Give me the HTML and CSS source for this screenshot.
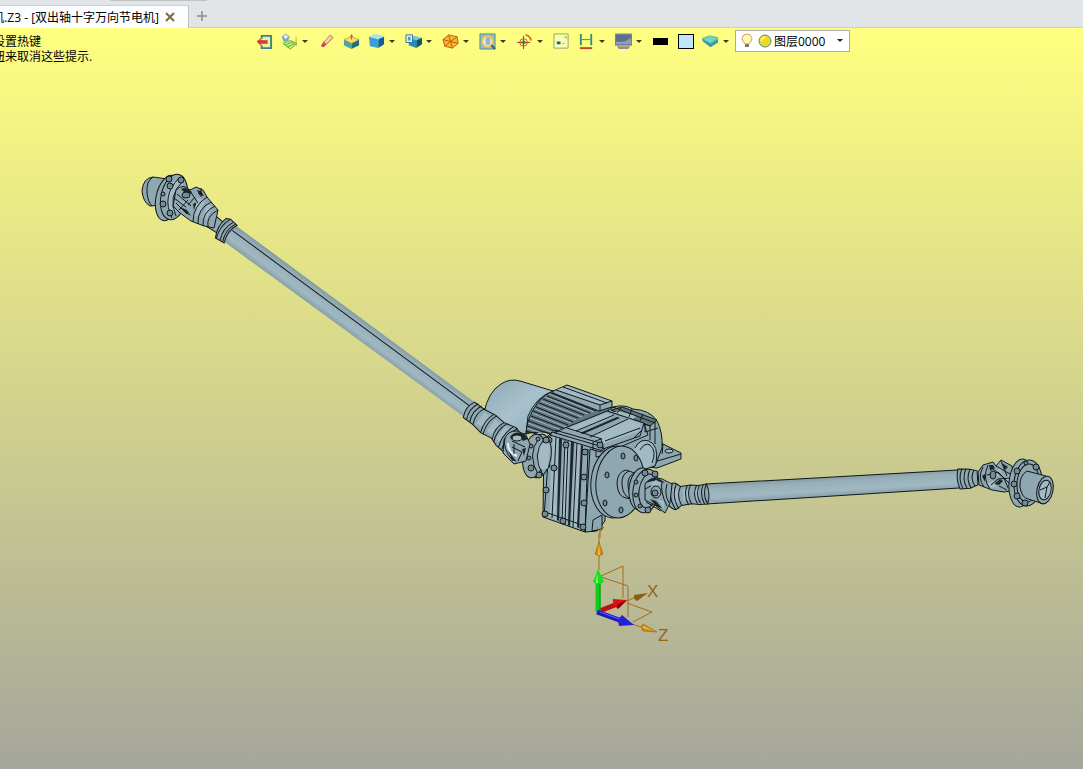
FILE: index.html
```html
<!DOCTYPE html>
<html lang="zh-CN">
  <head>
    <title>双出轴十字万向节电机</title>
    <meta charset="UTF-8" />
    <meta name="viewport" content="width=device-width, initial-scale=1.0" />
    <link rel="stylesheet" href="styles.css">
  </head>

  <body>
    <header class="tab-bar">
      <div class="tab">
        <span class="tab-title">机.Z3 - [双出轴十字万向节电机]</span>
        <button class="tab-close" type="button" aria-label="关闭">
          <svg width="10" height="10" viewBox="0 0 10 10"><path d="M1 1 9 9M9 1 1 9" stroke="#7c6b3c" stroke-width="2" /></svg>
        </button>
      </div>
      <button class="tab-add" type="button" aria-label="新建">
        <svg width="12" height="12" viewBox="0 0 12 12"><path d="M6 1V11M1 6H11" stroke="#9b9fa1" stroke-width="2" /></svg>
      </button>
    </header>

    <main class="viewport">
      <!-- 3D model -->
      <svg class="scene" viewBox="0 28 1083 741" aria-hidden="true">
        <defs>
          <linearGradient id="tube" x1="0" y1="0" x2="0" y2="1">
            <stop offset="0" stop-color="#8299a0" />
            <stop offset=".25" stop-color="#97afb8" />
            <stop offset=".7" stop-color="#a0b8c1" />
            <stop offset="1" stop-color="#879ea6" />
          </linearGradient>
          <linearGradient id="motor" x1="0" y1="0" x2="1" y2="1">
            <stop offset="0" stop-color="#8fa8b2" />
            <stop offset=".5" stop-color="#a7c2ce" />
            <stop offset="1" stop-color="#91aab4" />
          </linearGradient>
        </defs>

        <!-- motor -->
        <path class="metal" fill="url(#motor)" d="M484 413Q488 392 501 384Q510 378 520 381L553 391L540 430L526 434L505 432Z" />
        <path class="line" d="M553 391Q536 397 528 416L526 434" />
        <path class="dark" d="M526 433Q527 416 539 401Q545 394 553 391L599 410L612 407L630 417L569 439L545 432Z" />
        <path class="fin" d="M549 394 594 412M545 397 588 414M541 401 582 417M538 405 576 420M535 409 571 423M532 413 566 427M530 418 561 430M528 423 556 434M527 428 550 436" />
        <path class="line" d="M551 393 596 411M547 396 590 413M543 399 584 415M539 403 578 418M536 407 573 422M533 411 568 425M531 416 563 428M529 421 558 432M527 426 553 435M526 431 548 437" />
        <path class="metal" d="M567 385 612 401V407L599 411L553 393V391Z" />
        <path class="light" d="M567 386 610 401L600 404L556 390Z" />
        <path class="line" d="M556 390 600 405V411M600 405 612 401M563 387 607 403" />

        <!-- rear of the gearbox and mounting foot -->
        <path class="metal" d="M650 437 663 444L681 453V459L657 468L640 466Z" />
        <path class="line" d="M654 462 681 454M663 444 662 454" />
        <ellipse class="light line" cx="669" cy="451" rx="4" ry="2" />
        <path class="metal" d="M604 414 613 407Q624 404 633 409Q650 410 657 421Q663 432 662 448L655 466L603 483V433Z" />
        <path class="dark" d="M611 410 622 407L657 420L650 426Z" />
        <path class="light" d="M618 411 636 416L632 421L613 413Z" />
        <path class="line" d="M613 407 655 423M610 412 650 426M621 408 617 413M632 409 629 417M643 414 640 421M655 421V444M650 426V440M645 424V432L658 428" />
        <path class="light" d="M635 447Q641 438 650 441Q660 446 656 462L646 468L632 460Z" />
        <path class="line" d="M635 448Q640 438 649 441Q659 445 656 463M640 450Q645 442 650 445Q657 451 652 463" />

        <!-- gearbox top -->
        <path class="metal" d="M560 430 607 411L644 423L640 436L603 449L555 433Z" />
        <path class="light" d="M568 428 606 413L614 416L576 432ZM590 436 628 419L641 424L638 432L605 443Z" />
        <path class="black" d="M580 433 617 417L620 418L583 434Z" />
        <path class="line" d="M567 428 602 439M576 431 614 415M590 437 628 419M640 428 605 441M644 424 648 435L606 453M641 431 634 438" />

        <!-- gearbox front -->
        <path class="metal" d="M603 447 606 455L605 521L597 531L585 532L587 448Z" />
        <path class="metal" d="M552 432 603 447L601 452L590 449L585 532L543 517L544 440Z" />
        <path class="light" d="M553 435 559 437L556 520L549 517ZM565 439 570 440L567 524L560 522ZM576 443 580 444L577 528L571 526Z" />
        <path class="black" d="M559 438 562 439L559 521L557 520ZM571 441 574 442L570 526L568 525ZM581 445 583 446L579 528L577 527Z" />
        <path class="line" d="M550 435 603 451M552 432 550 436L544 517M556 437 552 518M565 440 562 522M568 441 565 524M577 443 573 527M588 449 585 532M545 512 585 526M555 430 600 443M593 450V442L601 439L603 447M596 451V457L606 455" />
        <path class="metal" d="M593 520 602 515V529L592 531Z" />
        <g class="bolt">
          <circle cx="549" cy="440" r="3" /><circle cx="566" cy="445" r="3" /><circle cx="585" cy="452" r="3" />
          <circle cx="547" cy="465" r="3" /><circle cx="554" cy="468" r="3" /><circle cx="584" cy="477" r="3" />
          <circle cx="546" cy="490" r="3" /><circle cx="584" cy="503" r="3" /><circle cx="545" cy="514" r="3" />
          <circle cx="563" cy="521" r="3" /><circle cx="583" cy="527" r="3" /><circle cx="600" cy="445" r="3" />
        </g>

        <!-- output flange -->
        <ellipse class="metal" cx="615" cy="482" rx="24" ry="36" transform="rotate(6 615 482)" />
        <ellipse class="metal" cx="620" cy="482" rx="24" ry="36" transform="rotate(6 620 482)" />
        <g class="bolt">
          <ellipse cx="623" cy="456" rx="2" ry="3" /><ellipse cx="636" cy="458" rx="2" ry="3" />
          <ellipse cx="607" cy="475" rx="2" ry="3" /><ellipse cx="605" cy="503" rx="2" ry="3" />
          <ellipse cx="621" cy="510" rx="2" ry="3" />
        </g>
        <path class="metal" d="M640 475 626 470Q617 472 617 484Q618 497 626 498L640 500Z" />
        <path class="line" d="M629 471Q621 474 622 485Q623 495 629 498M634 473Q627 477 628 486Q629 496 634 499" />

        <!-- right shaft -->
        <g transform="translate(706 494) rotate(-3.4)">
          <path fill="url(#tube)" d="M0 -10 257 -9V9L0 10Z" />
          <path class="line" d="M0 -10 257 -9M0 10 257 9" />
          <path class="metal" d="M-38 -9Q-33 -15 -29 -12L-25 -9L-15 -10L-7 -9L1 -10Q5 0 1 10L-7 10L-15 9L-25 10L-31 14Q-38 12 -40 4Z" />
          <path class="light" d="M-33 -7H-27V7H-33ZM-23 -6H-17V6H-23ZM-12 -6H-7V6H-12Z" />
          <path class="line" d="M-33 -13Q-39 0 -31 14M-29 -12Q-35 0 -28 13M-25 -9Q-30 0 -25 10M-18 -10Q-23 0 -18 10M-15 -10Q-20 0 -15 9M-9 -9Q-14 0 -9 9M-6 -9Q-11 0 -6 9M-2 -10Q-7 0 -2 10M1 -10Q-4 0 1 10" />
          <path class="metal" d="M253 -10 265 -9L272 -7V7L264 10L254 10Q250 0 253 -10Z" />
          <path class="line" d="M257 -10Q252 0 257 10M261 -10Q256 0 261 10M265 -9Q260 0 265 10M269 -8Q264 0 269 8" />
        </g>
        <ellipse class="metal" cx="641" cy="489" rx="12" ry="21" transform="rotate(6 641 489)" />
        <ellipse class="metal" cx="646" cy="491" rx="13" ry="22" transform="rotate(8 646 491)" />
        <ellipse class="line" cx="648" cy="491" rx="9" ry="17" transform="rotate(8 648 491)" />
        <g class="bolt">
          <circle cx="645" cy="473" r="3" /><circle cx="655" cy="474" r="3" /><circle cx="636" cy="482" r="2" />
          <circle cx="636" cy="495" r="2" /><circle cx="640" cy="506" r="2" /><circle cx="648" cy="510" r="3" />
        </g>
        <path class="metal" d="M645 484Q652 475 662 479L672 484L670 503L665 513L655 505L645 500Z" />
        <path class="black" d="M645 483Q653 475 661 480L665 483L653 481ZM650 499 656 501L662 508L657 507Z" />
        <path class="light" d="M649 484 656 480L662 483L657 486ZM657 499 664 501V509Z" />
        <ellipse class="metal" cx="656" cy="492" rx="5" ry="6" />
        <ellipse class="bolt" cx="655" cy="493" rx="3" ry="3" />
        <path class="line" d="M645 489 651 486M662 482Q660 492 667 506M667 484Q664 494 669 503M646 502 661 511" />

        <!-- right end joint -->
        <path class="metal" d="M978 472 983 465L993 462L996 466L1001 460L1012 466L1016 490L1004 492L992 490L979 485Z" />
        <path class="black" d="M989 465 993 465L995 468L990 471ZM1002 463 1008 467L1005 470ZM994 484 1000 479L1003 481L999 485ZM982 476 985 474V482Z" />
        <path class="light" d="M995 471 1003 467L1000 475L994 478ZM1004 479 1010 473V483ZM987 483 993 481 997 487 991 488Z" />
        <path class="line" d="M983 467Q977 478 984 487M988 465Q982 479 990 489M987 475 998 472L1010 484M992 468 1004 478L1008 488M991 485 998 479L1009 478M996 466 1010 474M1001 461 1007 476M999 486 1007 490" />
        <ellipse class="bolt" cx="993" cy="475" rx="3" ry="4" />
        <ellipse class="metal" cx="1021" cy="483" rx="12" ry="24" transform="rotate(5 1021 483)" />
        <ellipse class="metal" cx="1028" cy="483" rx="14" ry="23" transform="rotate(5 1028 483)" />
        <ellipse class="line" cx="1028" cy="483" rx="11" ry="19" transform="rotate(5 1028 483)" />
        <g class="bolt">
          <circle cx="1026" cy="463" r="2" /><circle cx="1036" cy="467" r="3" /><circle cx="1017" cy="471" r="3" />
          <circle cx="1014" cy="484" r="3" /><circle cx="1017" cy="496" r="3" /><circle cx="1025" cy="503" r="3" />
        </g>
        <path class="metal" d="M1046 476 1027 471Q1019 476 1020 487Q1022 498 1028 499L1044 504Z" />
        <ellipse class="metal" cx="1045" cy="490" rx="8" ry="14" transform="rotate(12 1045 490)" />
        <ellipse class="light line" cx="1045" cy="490" rx="6" ry="10" transform="rotate(12 1045 490)" />
        <path class="line" d="M1040 490 1047 487L1050 482M1047 487 1045 498" />

        <!-- left shaft -->
        <g transform="translate(225 230) rotate(36.3)">
          <path fill="url(#tube)" d="M0 -10 312 -9V9L0 10Z" />
          <path class="line" d="M6 -4 308 -3" />
          <path class="metal" d="M-17 -6 -3 -5V7L-17 8Z" />
          <path class="metal" d="M-6 -10 -2 -12L7 -11Q2 0 7 11L-3 12Q-9 2 -6 -10Z" />
          <path class="line" d="M-2 -12Q-7 0 -2 12M2 -11Q-3 0 2 11M5 -11Q0 0 5 11" />
          <path class="metal" d="M303 -9 315 -9L328 -11L339 -10L352 -13L358 -11L357 14L346 13L338 10L326 12L315 10L303 10Q298 0 303 -9Z" />
          <path class="light" d="M317 -7H324V7H317ZM330 -7H336V7H330ZM342 -8H347V8H342Z" />
          <path class="line" d="M307 -10Q302 0 307 10M311 -10Q306 0 311 10M315 -10Q310 0 315 10M326 -11Q321 0 326 12M329 -11Q324 0 329 12M339 -10Q334 0 339 10M342 -11Q337 0 342 12M349 -12Q344 0 349 13M353 -13Q348 0 353 13" />
        </g>

        <!-- joint at the gearbox -->
        <ellipse class="metal" cx="539" cy="456" rx="12" ry="22" transform="rotate(9 539 456)" />
        <ellipse class="metal" cx="534" cy="456" rx="11" ry="22" transform="rotate(9 534 456)" />
        <path class="light" d="M537 447Q543 440 550 445L548 468Q541 472 537 466Z" />
        <path class="line" d="M539 438Q526 455 539 476M544 439Q531 455 543 475" />
        <g class="bolt">
          <circle cx="538" cy="439" r="2" /><circle cx="546" cy="440" r="3" /><circle cx="531" cy="446" r="2" />
          <circle cx="529" cy="458" r="2" /><circle cx="531" cy="468" r="3" /><circle cx="539" cy="475" r="3" />
        </g>
        <path class="metal" d="M504 440Q508 430 517 431L526 435L530 444L526 461L514 464L503 453Z" />
        <path class="black" d="M510 437Q515 430 524 434L528 439L523 441L519 436L512 440ZM508 450 513 457L517 462L512 460ZM522 449 526 448L524 456Z" />
        <ellipse class="light line" cx="517" cy="438" rx="5" ry="3" />
        <path class="shine" d="M508 443Q508 453 517 456" />
        <path class="line" d="M505 438Q502 448 513 461M512 441 525 447M512 447 522 452L518 461M514 444V454" />

        <!-- left end joint -->
        <path class="metal" d="M168 179 153 177Q143 178 142 191Q143 202 150 206L165 205Z" />
        <path class="line" d="M153 177Q146 181 147 193Q148 202 152 206" />
        <ellipse class="metal" cx="168" cy="198" rx="12" ry="23" transform="rotate(12 168 198)" />
        <ellipse class="metal" cx="174" cy="197" rx="13" ry="23" transform="rotate(12 174 197)" />
        <path class="light" d="M170 185Q175 178 183 182L180 207Q174 216 168 210Q164 198 170 185Z" />
        <path class="line" d="M179 178Q161 196 172 218M183 181Q167 196 176 216" />
        <g class="bolt">
          <circle cx="169" cy="179" r="3" /><circle cx="181" cy="180" r="3" /><circle cx="170" cy="186" r="3" />
          <circle cx="163" cy="194" r="2" /><circle cx="163" cy="204" r="3" /><circle cx="170" cy="213" r="3" />
        </g>
        <path class="metal" d="M176 190Q183 183 190 190L196 187L203 190L207 197L218 210L214 228L204 226L191 221L180 213L173 206Z" />
        <path class="black" d="M181 189Q186 186 191 191L192 194L184 192ZM197 190 201 191L204 196L199 195ZM180 207 187 210L191 216L186 213ZM193 204 197 202L194 210Z" />
        <path class="light" d="M197 198 205 200L200 214L194 217ZM178 199 188 204L183 207ZM207 204 212 206 207 219 202 218Z" />
        <path class="line" d="M207 197Q193 206 193 222M211 202Q197 209 198 224M215 206Q202 212 203 226M218 210Q206 216 208 227M174 198 186 207M177 194 191 206M190 191 198 203M201 188V197M179 210 188 200M176 203 187 214M188 205 195 197" />
        <ellipse class="bolt" cx="186" cy="195" rx="4" ry="3" />

        <!-- coordinate axes -->
        <g class="axis">
          <path d="M599 533V570M601 576 623 566V598M601 577 628 586V617M627 603 652 612L633 622M627 601 636 597M632 624 645 628" />
        </g>
        <path d="M600 538V532L597 527M600 532 604 527" fill="none" stroke="#a86a1c" />
        <path fill="#d18b0b" stroke="#8c5a0c" stroke-width=".5" d="M599 542 603 554Q599 557 595 554ZM657 632 643 624Q640 627 643 631Z" />
        <path fill="#f6c35a" d="M599 544 600 555H598ZM643 626 654 631L643 628Z" />
        <path fill="#8f5b10" d="M648 593 634 595Q633 599 637 601Z" />
        <text class="axis-label" x="647" y="597">X</text>
        <text class="axis-label" x="658" y="641">Z</text>
        <path d="M597 612 620 603" stroke="#c40d0d" stroke-width="5" />
        <path fill="#dc1010" d="M627 600 613 599Q612 605 618 609Z" />
        <path fill="#7c0808" d="M627 600 617 605L618 609Z" />
        <path d="M598 582V612" stroke="#11cf18" stroke-width="5" />
        <path d="M600 584V612" stroke="#0a8c10" stroke-width="1" />
        <path fill="#15de1c" d="M598 569 604 582Q598 586 593 582Z" />
        <path fill="#96ff98" d="M597 573 598 583H596Z" />
        <path d="M597 612 622 621" stroke="#1b19c4" stroke-width="5" />
        <path d="M600 612 622 620" stroke="#6262f5" stroke-width="1" />
        <path fill="#2421d5" d="M634 625 622 615Q617 620 619 626Z" />
      </svg>

      <div class="overlay">
        <p class="hint">设置热键<br>钮来取消这些提示.</p>

        <div class="toolbar">
          <button class="tool" type="button" aria-label="退出">
            <svg viewBox="0 0 18 18"><path d="M6 6V3H16V16H6V13" fill="#e6f2a0" stroke="#3f8289" stroke-width="2" /><path d="M1 9 5 6V8H12V11H5V13Z" fill="#d8402c" stroke="#a52a1b" stroke-width=".5" /></svg>
          </button>
          <button class="tool has-menu" type="button" aria-label="草图">
            <svg viewBox="0 0 18 18"><path d="M2 11 10 8 17 11 10 17Z" fill="#c9f07a" stroke="#5cae3a" /><path d="M4 13 11 10 17 13M6 15 13 12" fill="none" stroke="#5cae3a" /><path d="M1 4 5 1 9 4 7 9 3 9Z" fill="#6fa7b2" stroke="#9cc0be" /><circle cx="5" cy="4" r="2" fill="#e9f5f3" /><path d="M16 4V12" stroke="#c5b13e" /></svg>
          </button>
          <button class="tool" type="button" aria-label="橡皮擦">
            <svg viewBox="0 0 18 18"><path d="M13 2 16 5 9 12 6 10Z" fill="#f0bf99" stroke="#a4674c" stroke-width=".8" /><path d="M6 9 9 12 6 15 3 14Z" fill="#d43a55" /><path d="M13 4 7 11" stroke="#fff0cf" /></svg>
          </button>
          <button class="tool" type="button" aria-label="基准面">
            <svg viewBox="0 0 18 18"><path d="M1 7 9 10V17L1 13Z" fill="#4ba3a6" /><path d="M9 10 17 7V13L9 17Z" fill="#1c7079" /><path d="M1 7 9 4 17 7 9 11Z" fill="#f7e06c" stroke="#b99a34" stroke-width=".8" /><path d="M9 2V7" stroke="#b5641d" /><path d="M7 4 9 1 11 4Z" fill="#c26b22" /></svg>
          </button>
          <button class="tool has-menu" type="button" aria-label="着色">
            <svg viewBox="0 0 18 18"><path d="M1 4 11 6V16L2 14Z" fill="#3a9fda" /><path d="M11 6 17 4V12L11 16Z" fill="#125c99" /><path d="M1 4 7 1 17 3 11 7Z" fill="#a6e2f2" /></svg>
          </button>
          <button class="tool has-menu" type="button" aria-label="视图">
            <svg viewBox="0 0 18 18"><path d="M4 5 12 7V16L4 13Z" fill="#248fb8" /><path d="M12 7 18 5V12L12 16Z" fill="#0c5577" /><path d="M5 5 10 3 18 5 12 8Z" fill="#75cad9" /><path d="M1 2H8V10H1Z" fill="#e6f5fb" stroke="#2a6f9a" /><path d="M3 4H6V8H3Z" fill="#5a98bb" /></svg>
          </button>
          <button class="tool has-menu" type="button" aria-label="线框">
            <svg viewBox="0 0 18 18"><path d="M1 7 7 2 16 4 17 11 11 16 3 14Z" fill="#ffb42e" stroke="#b45e0c" /><path d="M1 7 9 9 16 4M9 9 11 16M7 2 9 9 3 14M9 9 17 11" fill="none" stroke="#b45e0c" /></svg>
          </button>
          <button class="tool has-menu" type="button" aria-label="缩放">
            <svg viewBox="0 0 18 18"><path d="M1 1H17V17H1Z" fill="#8fbfb4" stroke="#4f8f95" /><circle cx="9" cy="9" r="6" fill="#e3ecdf" stroke="#e3bf58" stroke-width="2" /><path d="M7 6 9 4 12 5V12L9 13 7 12Z" fill="#9eb3c8" /><path d="M13 13 17 17" stroke="#2f6369" stroke-width="2" /></svg>
          </button>
          <button class="tool has-menu" type="button" aria-label="旋转中心">
            <svg viewBox="0 0 18 18"><circle cx="8" cy="10" r="4" fill="none" stroke="#bb5731" /><path d="M8 3V17M1 10H15" stroke="#ae3926" /><path d="M8 8V12M6 10H10" stroke="#2b8145" stroke-width="2" /><path d="M10 2Q15 3 16 8" fill="none" stroke="#d27427" stroke-width="2" /></svg>
          </button>
          <button class="tool" type="button" aria-label="窗口">
            <svg viewBox="0 0 18 18"><path d="M1 1H16V16H1Z" fill="#f8ffac" stroke="#92a463" /><path d="M4 9H8V14H4Z" fill="#fff" /><path d="M4 9H8V12H4Z" fill="#285d80" /><path d="M12 4H14V6M10 11H12" fill="none" stroke="#8b9d5a" /></svg>
          </button>
          <button class="tool has-menu" type="button" aria-label="标注">
            <svg viewBox="0 0 18 18"><path d="M3 1V13M14 1V13" stroke="#2e9476" stroke-width="2" /><path d="M4 7H13" stroke="#2e9476" stroke-width="1" /><path d="M2 16H15" stroke="#c64425" stroke-width="2" /></svg>
          </button>
          <button class="tool has-menu" type="button" aria-label="显示">
            <svg viewBox="0 0 18 18"><path d="M0 1H18V13H0Z" fill="#5f6e8d" stroke="#8d98ab" /><path d="M1 9Q9 11 17 5V12H1Z" fill="#8f9cb2" /><path d="M2 14H16L14 17H4Z" fill="#8d9295" /></svg>
          </button>
          <button class="tool" type="button" aria-label="线色"><span class="swatch-line"></span></button>
          <button class="tool" type="button" aria-label="面色"><span class="swatch-fill"></span></button>
          <button class="tool has-menu" type="button" aria-label="图层">
            <svg viewBox="0 0 18 18"><path d="M0 6 9 11 17 6V10L9 15 1 9Z" fill="#3a97a0" /><path d="M0 6 8 3 17 5 9 11Z" fill="#6fd6c0" stroke="#4aa9a3" stroke-width=".8" /></svg>
          </button>

          <label class="layer-box" aria-label="当前图层">
            <svg class="layer-icons" width="32" height="16" viewBox="0 0 32 16"><path d="M4 11Q1 8 1 5Q2 1 6 1Q10 1 11 5Q11 8 8 11Z" fill="#fff8bd" stroke="#cfa547" /><path d="M4 11H8V14H4Z" fill="#7d7a70" /><circle cx="24" cy="8" r="6" fill="#f3d91c" stroke="#4f8c8d" /><path d="M20 8Q21 5 24 4" fill="none" stroke="#fff47c" stroke-width="2" /></svg>
            <select class="layer-select">
              <option>图层0000</option>
            </select>
          </label>
        </div>
      </div>
    </main>
  </body>
</html>
```
FILE: styles.css
```css
* {
  box-sizing: border-box;
}

body {
  margin: 0;
  height: 100vh;
  display: flex;
  flex-direction: column;
  font-family: "Open Sans", "Noto Sans CJK SC", sans-serif;
  font-size: 12px;
  color: #000;
}

button {
  background: none;
  border: none;
  padding: 0;
  font: inherit;
}

/* tabs */
.tab-bar {
  display: flex;
  align-items: flex-end;
  height: 28px;
  background-color: #e1e5e8;
  border-bottom: 1px solid #cdd1d3;
}

/* lower edge of the panel above the tabs */
.tab-bar::before {
  content: "";
  position: absolute;
  top: 0;
  left: 110px;
  width: 97px;
  height: 1px;
  background-color: #bfc3c5;
}

.tab {
  display: flex;
  align-items: center;
  justify-content: flex-end;
  gap: 6px;
  width: 189px;
  height: 23px;
  margin-bottom: -1px;
  padding-right: 13px;
  overflow: hidden;
  background-color: #fcfdfe;
  border-top: 1px solid #cdd1d3;
  border-right: 1px solid #bcc0c2;
}

.tab-title {
  flex: none;
  white-space: nowrap;
}

.tab-close,
.tab-add {
  display: flex;
  flex: none;
}

.tab-add {
  margin: 0 0 5px 7px;
}

/* drawing area */
.viewport {
  position: relative;
  flex: 1;
  min-height: 0;
  background: linear-gradient(#ffff80, #a5a69b);
}

.scene {
  display: block;
  width: 100%;
  height: 100%;
}

.metal {
  stroke: #10181c;
  stroke-width: 1;
}

.metal:not([fill]) {
  fill: #8fa7b0;
}

.light {
  fill: #a2bac4;
}

.dark {
  fill: #61757d;
  stroke: #10181c;
}

.black {
  fill: #1c272c;
}

.fin {
  fill: none;
  stroke: #9cb4be;
}

.line {
  stroke: #10181c;
  stroke-width: 1;
}

.line:not(.light) {
  fill: none;
}

.shine {
  fill: none;
  stroke: #e6f2f7;
  stroke-width: 2;
}

.bolt {
  fill: #768c95;
  stroke: #10181c;
}

.axis {
  fill: none;
  stroke: #a86a1c;
  stroke-width: 1;
}

.axis-label {
  font-family: "Liberation Sans", Arial, sans-serif;
  font-size: 17px;
  fill: #94631c;
}

/* hints and tools lie over the drawing */
.overlay {
  position: absolute;
  top: 0;
  left: 0;
  right: 0;
  display: flex;
  align-items: flex-start;
  overflow: hidden;
}

.hint {
  flex: none;
  width: 259px;
  margin: 6px 0 0 -7px;
  line-height: 15px;
}

.toolbar {
  display: flex;
  align-items: center;
  padding-top: 2px;
}

.tool {
  display: flex;
  flex: none;
  align-items: center;
  justify-content: center;
  width: 25px;
  height: 22px;
}

.tool svg {
  width: 17px;
  height: 17px;
}

.has-menu {
  width: 37px;
  justify-content: flex-start;
  padding-left: 4px;
}

.has-menu::after {
  content: "";
  margin-left: 4px;
  border: 3px solid transparent;
  border-top-color: #3c3a24;
  border-bottom: none;
}

.swatch-line {
  width: 15px;
  height: 7px;
  background-color: #000;
}

.swatch-fill {
  width: 16px;
  height: 15px;
  background-color: #bfe6f5;
  border: 1px solid #000;
}

.layer-box {
  position: relative;
  display: flex;
  align-items: center;
  width: 115px;
  height: 22px;
  background-color: #fff;
  border: 1px solid #a9abb0;
}

.layer-icons {
  position: absolute;
  left: 5px;
  pointer-events: none;
}

.layer-box::after {
  content: "";
  position: absolute;
  right: 6px;
  top: 8px;
  border: 3px solid transparent;
  border-top-color: #222;
  border-bottom: none;
  pointer-events: none;
}

.layer-select {
  appearance: none;
  width: 100%;
  height: 100%;
  padding: 0 0 0 38px;
  border: none;
  background: none;
  color: #000;
  font: inherit;
}
```
